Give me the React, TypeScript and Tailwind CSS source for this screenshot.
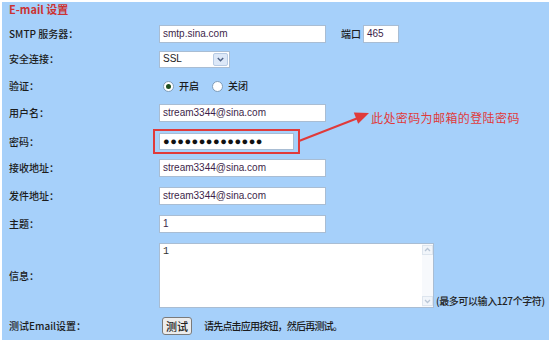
import type { ReactNode } from "react";

const cjk = { fontFamily: '"Noto Sans CJK SC", "Liberation Sans", sans-serif' };
const arial = { fontFamily: '"Liberation Sans", Arial, sans-serif' };

const Row = ({ label, className, children }: { label: string; className: string; children: ReactNode }) => {
  return (
    <div className={`flex items-center ${className}`}>
      <div className="w-[157px] shrink-0 pl-[7px] leading-none">{label}</div>
      <div className="flex items-center">{children}</div>
    </div>
  );
};

const TextBox = ({ value, className }: { value: string; className: string }) => {
  return (
    <div
      className={`h-[18px] bg-white border border-[#a9bdd3] pl-[3px] flex items-center text-[10px] text-[#3d1f4a] leading-none ${className}`}
      style={arial}
    >
      {value}
    </div>
  );
};

const Radio = ({ checked, label }: { checked: boolean; label: string }) => {
  return (
    <div className="flex items-center">
      <span className="w-[11px] h-[11px] rounded-full border border-[#7f9db9] bg-white flex items-center justify-center">
        {checked && <span className="w-[5px] h-[5px] rounded-full bg-[#1f4f1f]" />}
      </span>
      <span className="ml-[5px] leading-none">{label}</span>
    </div>
  );
};

export default function App() {
  return (
    <div className="w-[556px] h-[351px] bg-white p-[2px]" style={cjk}>
      <div className="relative w-[547px] h-[338px] bg-[#a6d0fa] text-[10px] text-[#1c1c1c] font-medium">
        <div className="h-[15px] pl-[7px] flex items-center text-[11px] font-bold text-[#cc3333] leading-none">
          E-mail 设置
        </div>

        <Row label="SMTP 服务器：" className="mt-[8px] h-[18px]">
          <TextBox value="smtp.sina.com" className="w-[167px]" />
          <span className="ml-[15px] mr-[2px] leading-none">端口</span>
          <TextBox value="465" className="w-[36px]" />
        </Row>

        <Row label="安全连接：" className="mt-[7px] h-[18px]">
          <div className="w-[71px] h-[17px] bg-white border border-[#a9bdd3] flex items-center justify-between pl-[3px] pr-[1px]">
            <span className="text-[10px] text-[#222] leading-none" style={arial}>SSL</span>
            <span className="w-[15px] h-[13px] bg-[#dce8f8] border border-[#b7cbe4] rounded-[2px] flex items-center justify-center">
              <svg width="7" height="5" viewBox="0 0 7 5">
                <path d="M0.8 1 L3.5 3.8 L6.2 1" fill="none" stroke="#4d6185" strokeWidth="1.4" />
              </svg>
            </span>
          </div>
        </Row>

        <Row label="验证：" className="mt-[9px] h-[18px]">
          <div className="ml-[4px] flex items-center gap-[13px]">
            <Radio checked label="开启" />
            <Radio checked={false} label="关闭" />
          </div>
        </Row>

        <Row label="用户名：" className="mt-[9px] h-[18px]">
          <TextBox value="stream3344@sina.com" className="w-[167px]" />
        </Row>

        <Row label="密码：" className="mt-[7px] h-[25px]">
          <div className="-ml-[6px] border-2 border-[#e03a3a] px-[4px] py-[2px]">
            <div className="w-[135px] h-[17px] bg-white border border-[#a9bdd3] pl-[3px] flex items-center text-[#111] text-[11px] leading-none tracking-[0.5px]" style={arial}>
              ●●●●●●●●●●●●●●
            </div>
          </div>
        </Row>

        <Row label="接收地址：" className="mt-[5px] h-[18px]">
          <TextBox value="stream3344@sina.com" className="w-[167px]" />
        </Row>

        <Row label="发件地址：" className="mt-[10px] h-[18px]">
          <TextBox value="stream3344@sina.com" className="w-[167px]" />
        </Row>

        <Row label="主题：" className="mt-[10px] h-[18px]">
          <TextBox value="1" className="w-[167px]" />
        </Row>

        <Row label="信息：" className="mt-[10px] h-[65px]">
          <div className="flex items-end">
            <div className="w-[275px] h-[65px] shrink-0 bg-white border border-[#a9bdd3] flex">
              <div className="flex-1 pl-[3px] pt-[3px] text-[10px] text-[#333] leading-none" style={{ fontFamily: '"Liberation Mono", monospace' }}>
                1
              </div>
              <div className="w-[11px] flex flex-col justify-between bg-[#f7f9fc] py-[1px]">
                <svg width="11" height="10" viewBox="0 0 11 10">
                  <rect x="0.5" y="0.5" width="10" height="9" fill="#f1f5fa" stroke="#dde5ee" />
                  <path d="M3 6 L5.5 3.5 L8 6" fill="none" stroke="#b9c6d6" strokeWidth="1.3" />
                </svg>
                <svg width="11" height="10" viewBox="0 0 11 10">
                  <rect x="0.5" y="0.5" width="10" height="9" fill="#f1f5fa" stroke="#dde5ee" />
                  <path d="M3 4 L5.5 6.5 L8 4" fill="none" stroke="#b9c6d6" strokeWidth="1.3" />
                </svg>
              </div>
            </div>
            <span className="ml-[2px] mb-[2px] leading-none text-[#222] whitespace-nowrap tracking-[-0.4px]">(最多可以输入127个字符)</span>
          </div>
        </Row>

        <Row label="测试Email设置：" className="mt-[9px] h-[18px]">
          <button className="ml-[3px] h-[18px] px-[3px] bg-[#ececec] border border-[#7a7a7a] rounded-[3px] text-[11px] text-[#222] leading-none">
            测试
          </button>
          <span className="ml-[12px] leading-none whitespace-nowrap tracking-[-0.8px]">请先点击应用按钮，然后再测试。</span>
        </Row>

        <svg className="absolute left-[-2px] top-[-2px] pointer-events-none" width="556" height="351" viewBox="0 0 556 351">
          <line x1="299" y1="141" x2="358" y2="118" stroke="#e03a3a" strokeWidth="2" />
          <polygon points="369,113 353.8,112.6 358.2,123.8" fill="#e03a3a" />
        </svg>
        <div className="absolute left-[369px] top-[109px] text-[12px] leading-[14px] font-normal tracking-[0.4px] text-[#e03a3a] whitespace-nowrap">
          此处密码为邮箱的登陆密码
        </div>
      </div>
    </div>
  );
}
